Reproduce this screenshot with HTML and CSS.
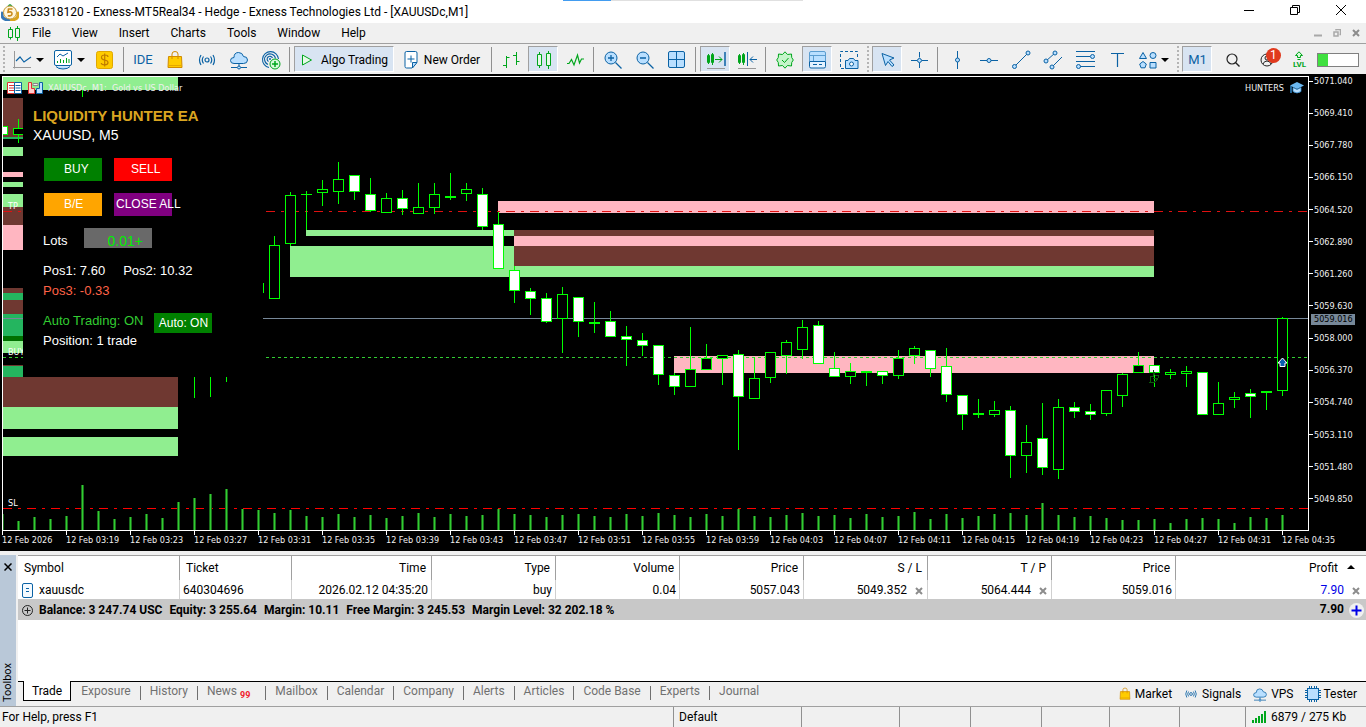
FILE: index.html
```html
<!DOCTYPE html>
<html lang="en">
<head>
<meta charset="utf-8">
<title>253318120 - Exness-MT5Real34 - Hedge - Exness Technologies Ltd - [XAUUSDc,M1]</title>
<link rel="stylesheet" href="styles.css">
</head>
<body>
<svg class="defs" width="0" height="0" aria-hidden="true">
  <symbol id="i-bag" viewBox="0 0 20 20"><path d="M3.500 6.500h13l.5 11h-14z" fill="#fc0" stroke="#d18b00"/><path d="M7 9V4q0-2.500 3-2.500T13 4v5" fill="none" stroke="#d18b00"/><path d="M3 15.500h14" stroke="#e5a800"/></symbol>
  <symbol id="i-signal" viewBox="0 0 20 20"><g fill="none" stroke="#0b62a4" stroke-width="1.200"><circle cx="10" cy="10" r="2"/><path d="M6.500 6.500q-2.500 3.500 0 7M13.500 6.500q2.500 3.500 0 7M4 5q-3 5 0 10M16 5q3 5 0 10"/></g></symbol>
  <symbol id="i-cloud" viewBox="0 0 20 20"><path d="M5 13.500q-3.500 0-3.500-3T5 7.500q0-5 4.500-5 4 0 5 4 4 0 4 3.500t-4 3.500z" fill="#b9dfff" stroke="#0b62a4"/><path d="M10 14v3M2 17.500h6M12 17.500h6" stroke="#0b62a4" fill="none"/><circle cx="10" cy="17.500" r="1.500" fill="#b9dfff" stroke="#0b62a4"/></symbol>
  <symbol id="i-x" viewBox="0 0 8 8"><path d="M1 1l6 6M7 1l-6 6" stroke="#8c8c8c" stroke-width="2"/></symbol>
</svg>

<header class="title-bar">
  <span class="loading-strip"></span>
  <svg class="logo" width="18" height="18" viewBox="0 0 18 18"><path d="M7 2.500Q9-.5 11 2.500L12 5H6z" fill="#2ba24c"/><path d="M2 9q-2 3 0 6 3 2.500 7 2" fill="none" stroke="#3577b5" stroke-width="3"/><path d="M16 9q2 3 0 6-3 2.500-7 2" fill="none" stroke="#d9a41e" stroke-width="3"/><circle cx="9" cy="9.500" r="6.500" fill="#fff6dc" stroke="#c69a3b"/><path d="M11.500 6H7.500L7 9.200q4-1 4 1.500 0 2.700-4.200 2" fill="none" stroke="#c8891a" stroke-width="1.600"/></svg>
  <h1>253318120 - Exness-MT5Real34 - Hedge - Exness Technologies Ltd - [XAUUSDc,M1]</h1>
  <div class="window-buttons">
    <button aria-label="Minimize"><svg width="12" height="12" viewBox="0 0 12 12"><path d="M1 6.500h10" stroke="#000"/></svg></button>
    <button aria-label="Restore"><svg width="12" height="12" viewBox="0 0 12 12"><path d="M1.500 3.500h7v7h-7zM3.500 3.500v-2h7v7h-2" fill="none" stroke="#000"/></svg></button>
    <button aria-label="Close"><svg width="12" height="12" viewBox="0 0 12 12"><path d="M1 1l10 10M11 1L1 11" stroke="#000"/></svg></button>
  </div>
</header>

<nav class="menu-bar">
  <svg width="12" height="15" viewBox="0 0 12 15"><path d="M.5 3.500h4v8h-4zM7.500 2.500h4v9h-4zM2.500 1v2.500M2.500 11.500v2M9.500 0v2.500M9.500 11.500V15" fill="none" stroke="#00a61c"/></svg>
  <button>File</button><button>View</button><button>Insert</button><button>Charts</button><button>Tools</button><button>Window</button><button>Help</button>
  <div class="mdi">
    <svg width="8" height="8" viewBox="0 0 8 8"><path d="M0 6.500h8" stroke="#a8a8a8" stroke-width="2"/></svg>
    <svg width="8" height="8" viewBox="0 0 8 8"><path d="M1 3h4v4H1zM3 1.500V.5h4.500v5H6.500" fill="none" stroke="#a8a8a8" stroke-width="1.500"/></svg>
    <svg width="8" height="8"><use href="#i-x"/></svg>
  </div>
</nav>

<div class="toolbar" role="toolbar">
  <i class="grip"></i>
  <button class="wide" aria-label="Line style"><svg width="20" height="20" viewBox="0 0 20 20"><path d="M2.500 1v17.500M1 17.500h18" stroke="#999" fill="none"/><path d="M4 11l4-4 4 5 7-5" fill="none" stroke="#0b62a4" stroke-width="1.200"/></svg><span class="caret"></span></button>
  <button class="wide second" aria-label="Indicators"><svg width="20" height="20" viewBox="0 0 20 20"><rect x="1.500" y=".5" width="17" height="15" rx="1.500" fill="#fff" stroke="#0b62a4"/><path d="M3 16.500q2 2.500 7 2.500t7-2.500" fill="#b9dfff" stroke="#0b62a4"/><path d="M4 7l3-3 3 2 5-3" fill="none" stroke="#0b62a4"/><path d="M4.500 13v-2M7.500 13v-4M10.500 13v-3M13.500 13V8M16 13V9" stroke="#00a61c"/></svg><span class="caret"></span></button>
  <button aria-label="Quotes"><svg width="18" height="18" viewBox="0 0 18 18"><rect x=".5" y=".5" width="16" height="17" rx="2" fill="#fc0" stroke="#e0a800"/><path d="M12 6q0-2-3.300-2T5.500 6.500q0 2 3.200 2.500t3.300 2.500q0 2.300-3.300 2.300T5.300 12M8.700 2.500v13" fill="none" stroke="#c07c00" stroke-width="1.200"/></svg></button>
  <i class="sep"></i>
  <button class="blue ide">IDE</button>
  <button aria-label="Market"><svg width="20" height="20"><use href="#i-bag"/></svg></button>
  <button aria-label="Signals"><svg width="20" height="20"><use href="#i-signal"/></svg></button>
  <button aria-label="Virtual hosting"><svg width="20" height="20"><use href="#i-cloud"/></svg></button>
  <button aria-label="Copy trading"><svg width="20" height="20" viewBox="0 0 20 20"><g fill="none" stroke="#0b62a4" stroke-width="1.100"><path d="M8 17.500A8 8 0 1 1 17.500 9M7 14.500a5.500 5.500 0 1 1 7.500-6M7.500 11.500a2.800 2.800 0 1 1 4-3.500"/></g><circle cx="9" cy="9" r="1" fill="#0b62a4"/><circle cx="14" cy="14" r="5" fill="#d8fadb" stroke="#00a61c"/><path d="M14 11v6M11 14h6" stroke="#00a61c" stroke-width="1.500"/></svg></button>
  <i class="sep"></i>
  <button class="text algo on"><svg width="12" height="12" viewBox="0 0 12 12"><path d="M1.500 1l9 5-9 5z" fill="#e6fae8" stroke="#00a61c"/></svg>Algo Trading</button>
  <button class="text order"><svg width="14" height="18" viewBox="0 0 14 18"><path d="M2.500.5h9q1.500 0 1.500 1.500v9l-5 6H2.500Q1 17 1 15.500V2Q1 .5 2.500.5z" fill="#fff" stroke="#0b62a4"/><path d="M13 11.500H8.500V17z" fill="#b9dfff" stroke="#0b62a4"/><path d="M7 4.500v7M3.500 8h7" stroke="#0b62a4"/></svg>New Order</button>
  <i class="sep"></i>
  <button aria-label="Bar chart"><svg width="18" height="18" viewBox="0 0 18 18"><path d="M4.500 5v12M4.500 6.500h3M1 14.500h3.500M14.500 1v13M11 4.500h3.500M14.500 10.500h3" stroke="#00a61c" fill="none"/></svg></button>
  <button class="on" aria-label="Candlesticks"><svg width="18" height="18" viewBox="0 0 18 18"><path d="M2.500 3.500h4v11h-4zM11.500 2.500h4v12h-4zM4.500 1v2.500M4.500 14.500V17M13.500 0v2.500M13.500 14.500V18" stroke="#00a61c" fill="#e6fae8"/></svg></button>
  <button aria-label="Line chart"><svg width="18" height="18" viewBox="0 0 18 18"><path d="M1 12.500h2l2.500-4L8 14l3.500-10 2 8 2-4H18" stroke="#00a61c" fill="none" stroke-width="1.200"/></svg></button>
  <i class="sep"></i>
  <button aria-label="Zoom in"><svg width="18" height="18" viewBox="0 0 18 18"><circle cx="7" cy="7" r="6" fill="#b9dfff" stroke="#0b62a4"/><path d="M11.500 11.500l6 6M4 7h6M7 4v6" stroke="#0b62a4" stroke-width="1.300"/></svg></button>
  <button aria-label="Zoom out"><svg width="18" height="18" viewBox="0 0 18 18"><circle cx="7" cy="7" r="6" fill="#b9dfff" stroke="#0b62a4"/><path d="M11.500 11.500l6 6M4 7h6" stroke="#0b62a4" stroke-width="1.300"/></svg></button>
  <button aria-label="Tile windows"><svg width="18" height="18" viewBox="0 0 18 18"><rect x=".5" y=".5" width="16" height="16" rx="1.500" fill="#b9dfff" stroke="#0b62a4"/><path d="M8.500 1v16M1 8.500h16" stroke="#0b62a4"/></svg></button>
  <i class="sep"></i>
  <button class="on" aria-label="Auto scroll"><svg width="20" height="20" viewBox="0 0 20 20"><path d="M1.500 5.500h2v7h-2zM5.500 4.500h2v8h-2zM2.500 4v10M6.500 3v12M9 9.500h7M13 6.500l3 3-3 3" stroke="#00a61c" fill="none"/><path d="M19 2v14" stroke="#0b62a4" stroke-width="1.500"/><path d="M1 18.500h18" stroke="#999"/></svg></button>
  <button aria-label="Chart shift"><svg width="20" height="20" viewBox="0 0 20 20"><path d="M1.500 5.500h2v7h-2zM5.500 4.500h2v8h-2zM2.500 4v10M6.500 3v12" stroke="#00a61c" fill="none"/><path d="M10.500 2v14M13 9.500h7M16 6.500l-3 3 3 3" stroke="#0b62a4" fill="none"/><path d="M1 18.500h18" stroke="#999"/></svg></button>
  <i class="sep"></i>
  <button aria-label="Indicator list"><svg width="18" height="18" viewBox="0 0 18 18"><path d="M9 .8l2.500 2.700L15.500 3l.2 3.500L17.300 9l-1.600 2.500-.2 3.500-4-.5L9 17.200l-2.500-2.700-4 .5-.2-3.500L.7 9l1.600-2.500L2.500 3l4 .5z" fill="#c6f5cb" stroke="#00a61c"/><path d="M6 9l2.500 2.500L12.500 7" stroke="#00a61c" fill="none"/></svg></button>
  <button class="on" aria-label="Toolbox"><svg width="18" height="18" viewBox="0 0 18 18"><path d="M.5 10V2Q.5.500 2 .5h13q1.500 0 1.500 1.500v8M.5 4.500h16M4.500 4.500v6" fill="#b9dfff" stroke="#5b9dd0"/><path d="M.5 10.500h16v5q0 1.500-1.500 1.500H2q-1.500 0-1.500-1.500zM4 13.500h4M10 13.500h3" fill="#e4f2ff" stroke="#0b62a4"/></svg></button>
  <button aria-label="Screenshot"><svg width="20" height="20" viewBox="0 0 20 20"><path d="M5 18.500H1.500v-17h17V7" fill="none" stroke="#0b62a4" stroke-dasharray="3 2"/><path d="M6.500 10.500H9L10.500 8.500h4L16 10.500h3v8H6.500z" fill="#b9dfff" stroke="#0b62a4"/><circle cx="12.500" cy="14" r="2" fill="#fff" stroke="#0b62a4"/></svg></button>
  <i class="grip"></i>
  <button class="on" aria-label="Cursor"><svg width="18" height="18" viewBox="0 0 18 18"><path d="M3 2.500l12 4.500-4.500 2 4.500 5-2 1.500-4-5-2.500 4z" fill="#b9dfff" stroke="#0b62a4"/></svg></button>
  <button aria-label="Crosshair"><svg width="18" height="18" viewBox="0 0 18 18"><path d="M9.500 1v5.500M9.500 11.500V17M1 9.500h6M12 9.500h6" stroke="#0b62a4"/><circle cx="9.500" cy="9.500" r="2" fill="#b9dfff" stroke="#0b62a4"/></svg></button>
  <i class="sep"></i>
  <button aria-label="Vertical line"><svg width="18" height="20" viewBox="0 0 18 20"><path d="M9.500 1v18" stroke="#0b62a4"/><circle cx="9.500" cy="10" r="2" fill="#b9dfff" stroke="#0b62a4"/></svg></button>
  <button aria-label="Horizontal line"><svg width="20" height="18" viewBox="0 0 20 18"><path d="M1 9.500h18" stroke="#0b62a4"/><circle cx="10" cy="9.500" r="2" fill="#b9dfff" stroke="#0b62a4"/></svg></button>
  <button aria-label="Trendline"><svg width="20" height="20" viewBox="0 0 20 20"><path d="M4 16L17 3" stroke="#0b62a4"/><circle cx="3.500" cy="16.500" r="2" fill="#b9dfff" stroke="#0b62a4"/><circle cx="17" cy="3" r="2" fill="#b9dfff" stroke="#0b62a4"/></svg></button>
  <button aria-label="Channel"><svg width="20" height="20" viewBox="0 0 20 20"><path d="M3 11l9-8M9 17l10-10" stroke="#0b62a4"/><circle cx="3" cy="11" r="2" fill="#b9dfff" stroke="#0b62a4"/><circle cx="12" cy="3" r="2" fill="#b9dfff" stroke="#0b62a4"/><circle cx="9" cy="17" r="2" fill="#b9dfff" stroke="#0b62a4"/></svg></button>
  <button aria-label="Fibonacci"><svg width="20" height="20" viewBox="0 0 20 20"><path d="M1 1.500h19M1 6.500h14M1 11.500h19M5 16.500h15" stroke="#0b62a4"/><circle cx="17.500" cy="6.500" r="2" fill="#b9dfff" stroke="#0b62a4"/><circle cx="3.500" cy="16.500" r="2" fill="#b9dfff" stroke="#0b62a4"/></svg></button>
  <button aria-label="Text"><svg width="16" height="16" viewBox="0 0 16 16"><path d="M2 1.500h13M8.500 1.500V15" stroke="#0b62a4" stroke-width="1.200"/></svg></button>
  <button class="wide" aria-label="Shapes"><svg width="18" height="18" viewBox="0 0 18 18"><g fill="#b9dfff" stroke="#0b62a4"><path d="M4 1.500l3.500 6h-7z"/><circle cx="14" cy="4.500" r="3"/><path d="M4 10.500l3.300 2.500-1.300 3.800H2L.7 13z"/><path d="M11 11.500h6v5.500h-6z"/></g></svg><span class="caret"></span></button>
  <i class="grip"></i>
  <button class="on blue m1">M1</button>
  <div class="status-icons">
    <button aria-label="Search"><svg width="16" height="16" viewBox="0 0 16 16"><circle cx="7" cy="7" r="5" fill="none" stroke="#222" stroke-width="1.200"/><path d="M10.500 10.500l4 4" stroke="#222" stroke-width="1.400"/></svg></button>
    <button class="account" aria-label="Account"><svg width="14" height="14" viewBox="0 0 14 14"><circle cx="7" cy="7" r="6" fill="none" stroke="#222"/><circle cx="7" cy="5" r="2" fill="none" stroke="#222"/><path d="M3 11q1-3 4-3t4 3" fill="none" stroke="#222"/></svg><span class="badge">1</span></button>
    <button class="lvl"><svg width="10" height="10" viewBox="0 0 10 10"><path d="M5 .8L8.500 4.500h-2v2h-3v-2h-2zM3.500 8.500h3" fill="#d8fadb" stroke="#00a61c"/></svg>LVL</button>
    <div class="meter"><span></span></div>
  </div>
</div>

<main class="chart">
  <div class="plot">
    <svg class="candles" id="plot" viewBox="3 77 1305 453" preserveAspectRatio="none" shape-rendering="crispEdges"></svg>
    <div class="chart-head">
      <svg width="15" height="12" viewBox="0 0 15 12"><path d="M.5.500h7v11h-7z" fill="#fff" stroke="#d33"/><path d="M7.500.500h7v11h-7z" fill="#fff" stroke="#0b62a4"/><path d="M2 3.500h5M2 6h5M2 8.500h5" stroke="#d33"/><path d="M8.500 3.500h5M8.500 6h5M8.500 8.500h5" stroke="#0b62a4"/></svg>
      <svg width="15" height="12" viewBox="0 0 15 12"><path d="M.5.500h3v6h3v5h-6z" fill="#fcc" stroke="#d33"/><path d="M14.500.500h-3v6h-3v5h6z" fill="#b9dfff" stroke="#0b62a4"/><path d="M5 1.500h5v2H5z" fill="#eee" stroke="#888"/></svg>
      <span>XAUUSDc, M1:&nbsp; Gold vs US Dollar</span>
    </div>
    <div class="expert-name">HUNTERS
      <svg width="14" height="12" viewBox="0 0 14 12"><path d="M7 0l7 3.500-7 3.500-7-3.500z" fill="#6bb8f0"/><path d="M3 5.500v4q4 3 8 0v-4L7 7.500z" fill="#b9dfff" stroke="#2d86c8" stroke-width=".8"/><path d="M1 4v7" stroke="#2d86c8" stroke-width="1.500"/></svg>
    </div>
    <span class="level tp">TP</span>
    <span class="level buy-level">BUY</span>
    <span class="level sl">SL</span>
    <section class="ea">
      <h2>LIQUIDITY HUNTER EA</h2>
      <p class="pair">XAUUSD, M5</p>
      <div class="ea-buttons">
        <button class="b-buy">BUY</button><button class="b-sell">SELL</button>
        <button class="b-be">B/E</button><button class="b-close">CLOSE ALL</button>
      </div>
      <div class="lots"><label for="lots">Lots</label><input id="lots" type="text" value="0.01+"></div>
      <p class="pos"><span>Pos1: 7.60</span><span>Pos2: 10.32</span></p>
      <p class="loss">Pos3: -0.33</p>
      <div class="auto"><span>Auto Trading: ON</span><button>Auto: ON</button></div>
      <p>Position: 1 trade</p>
    </section>
  </div>
  <div class="price-axis">
    <span>5071.040</span><span>5069.410</span><span>5067.780</span><span>5066.150</span><span>5064.520</span><span>5062.890</span><span>5061.260</span><span>5059.630</span><span>5058.000</span><span>5056.370</span><span>5054.740</span><span>5053.110</span><span>5051.480</span><span>5049.850</span>
    <b class="last-price">5059.016</b>
  </div>
  <div class="time-axis">
    <span>12 Feb 2026</span><span>12 Feb 03:19</span><span>12 Feb 03:23</span><span>12 Feb 03:27</span><span>12 Feb 03:31</span><span>12 Feb 03:35</span><span>12 Feb 03:39</span><span>12 Feb 03:43</span><span>12 Feb 03:47</span><span>12 Feb 03:51</span><span>12 Feb 03:55</span><span>12 Feb 03:59</span><span>12 Feb 04:03</span><span>12 Feb 04:07</span><span>12 Feb 04:11</span><span>12 Feb 04:15</span><span>12 Feb 04:19</span><span>12 Feb 04:23</span><span>12 Feb 04:27</span><span>12 Feb 04:31</span><span>12 Feb 04:35</span>
  </div>
</main>

<section class="toolbox">
  <aside class="toolbox-side">
    <button aria-label="Close toolbox"><svg width="8" height="8" viewBox="0 0 8 8"><path d="M.5.500l7 7M7.500.500l-7 7" stroke="#000" stroke-width="1.500"/></svg></button>
    <span>Toolbox</span>
  </aside>
  <div class="toolbox-main">
    <table>
      <colgroup><col class="c-symbol"><col class="c-ticket"><col class="c-time"><col class="c-num"><col class="c-num"><col class="c-num"><col class="c-num"><col class="c-num"><col class="c-num"><col></colgroup>
      <thead><tr><th class="left">Symbol</th><th class="left">Ticket</th><th>Time</th><th>Type</th><th>Volume</th><th>Price</th><th>S / L</th><th>T / P</th><th>Price</th><th class="profit">Profit<i class="sort"></i></th></tr></thead>
      <tbody>
        <tr><td class="left sym"><svg width="11" height="15" viewBox="0 0 11 15"><rect x=".5" y=".5" width="10" height="14" rx="1.500" fill="#f4faff" stroke="#0b62a4"/><path d="M4 5.500h3M4 8.500h3" stroke="#0b62a4"/></svg>xauusdc</td><td class="left">640304696</td><td>2026.02.12 04:35:20</td><td>buy</td><td>0.04</td><td>5057.043</td><td class="with-x">5049.352<svg width="8" height="8"><use href="#i-x"/></svg></td><td class="with-x">5064.444<svg width="8" height="8"><use href="#i-x"/></svg></td><td>5059.016</td><td class="gain with-x">7.90<svg width="8" height="8"><use href="#i-x"/></svg></td></tr>
      </tbody>
      <tfoot><tr><td colspan="9" class="left"><svg width="11" height="11" viewBox="0 0 11 11"><circle cx="5.500" cy="5.500" r="5" fill="none" stroke="#222"/><path d="M5.500 2.500v6M2.500 5.500h6" stroke="#222"/></svg><span>Balance: 3 247.74 USC</span><span>Equity: 3 255.64</span><span>Margin: 10.11</span><span>Free Margin: 3 245.53</span><span>Margin Level: 32 202.18 %</span></td><td class="total">7.90<svg width="15" height="15" viewBox="0 0 15 15"><circle cx="7.500" cy="7.500" r="7.500" fill="#f0f0f0"/><path d="M7.500 2.500v10M2.500 7.500h10" stroke="#0000e6" stroke-width="2"/></svg></td></tr></tfoot>
    </table>
    <div class="tab-row">
      <div class="tabs" role="tablist">
        <button class="active" role="tab">Trade</button><button role="tab">Exposure</button><button role="tab">History</button><button role="tab" class="news">News<sub>99</sub></button><button role="tab">Mailbox</button><button role="tab">Calendar</button><button role="tab">Company</button><button role="tab">Alerts</button><button role="tab">Articles</button><button role="tab">Code Base</button><button role="tab">Experts</button><button role="tab">Journal</button>
      </div>
      <div class="services">
        <button><svg width="14" height="14"><use href="#i-bag"/></svg>Market</button>
        <button><svg width="16" height="14"><use href="#i-signal"/></svg>Signals</button>
        <button><svg width="16" height="15"><use href="#i-cloud"/></svg>VPS</button>
        <button><svg width="16" height="16" viewBox="0 0 16 16"><rect x="2.500" y="2.500" width="11" height="11" fill="#b9dfff" stroke="#0b62a4"/><path d="M4.500 0v2M6.500 0v2M9.500 0v2M11.500 0v2M4.500 14v2M6.500 14v2M9.500 14v2M11.500 14v2M0 4.500h2M0 6.500h2M0 9.500h2M0 11.500h2M14 4.500h2M14 6.500h2M14 9.500h2M14 11.500h2" stroke="#0b62a4"/></svg>Tester</button>
      </div>
    </div>
  </div>
</section>

<footer class="status-bar">
  <span class="help">For Help, press F1</span><span class="s-default">Default</span><span class="s-98"></span><span class="s-71"></span><span class="s-71"></span><span class="s-68"></span><span class="s-70"></span><span class="s-66"></span>
  <span class="traffic"><svg width="14" height="12" viewBox="0 0 14 12"><path d="M1 9v3M4 7v5M7 5v7M10 3v9M13 0v12" stroke="#00a61c" stroke-width="2"/></svg>6879 / 275 Kb</span>
</footer>
<script src="chart.js"></script>
</body>
</html>
```
FILE: styles.css
```css
* { box-sizing: border-box; }
html, body { height: 100%; }
body {
  margin: 0;
  display: flex;
  flex-direction: column;
  overflow: hidden;
  background: #f0f0f0;
  color: #000;
  font: 12px/16px Roboto, "Noto Sans", sans-serif;
}
button, input { font: inherit; color: inherit; border: 0; padding: 0; margin: 0; background: none; }
h1, h2, p { margin: 0; font: inherit; }
svg { flex: none; display: block; }
.defs { position: absolute; }

.title-bar { position: relative; flex: none; height: 23px; display: flex; align-items: center; gap: 4px; padding-left: 1px; background: #fff; }
.loading-strip { position: absolute; top: 0; left: 41.2%; width: 240px; height: 1px; background: linear-gradient(90deg, #429cf0 20%, #e0e0e0 20%); }
.window-buttons { margin-left: auto; display: flex; padding: 0 2px 3px 0; }
.window-buttons button { width: 46px; display: flex; justify-content: center; }

.menu-bar { flex: none; height: 21px; display: flex; align-items: center; padding-left: 8px; border-bottom: 1px solid #a0a0a0; }
.menu-bar button { padding: 0 10px 0 11px; }
.menu-bar svg + button { padding-left: 12px; }
.mdi { margin-left: auto; display: flex; gap: 11px; padding-right: 6px; }

.toolbar { flex: none; height: 30px; display: flex; align-items: center; gap: 2px; padding: 0 0 0 2px; }
.toolbar > button { flex: none; width: 30px; height: 26px; display: flex; align-items: center; justify-content: center; padding: 2px 0 0; }
.toolbar > .wide { width: 40px; gap: 4px; }
.toolbar > .second { width: 38px; }
.toolbar > .on { background: #d8e4f2; border: 1px solid #fff; border-top-color: #a0a0a0; border-left-color: #a0a0a0; padding: 1px 0 0 1px; }
.toolbar > .text { white-space: nowrap; gap: 8px; }
.toolbar > .algo { width: 100px; }
.toolbar > .order { width: 92px; gap: 6px; }
.caret { width: 0; height: 0; border: 4px solid transparent; border-top-color: #000; border-bottom: 0; }
.blue { color: #0b62a4; }
.toolbar > .ide, .toolbar > .m1 { font-size: 13px; }
.sep { flex: none; width: 4px; height: 25px; background: linear-gradient(90deg, transparent 1px, #909090 1px 2px, transparent 2px); }
.grip { flex: none; width: 4px; height: 26px; background: repeating-linear-gradient(#b4b4b4 0 2px, transparent 2px 4px) 1px 0 / 2px 100% no-repeat; }
.status-icons { flex: 1; display: flex; align-items: center; justify-content: flex-end; gap: 11px; padding: 2px 7px 0 0; }
.account { position: relative; padding: 0 8px; }
.badge { position: absolute; right: 1px; top: -5px; width: 15px; height: 15px; border-radius: 8px; background: #e03a1e; color: #fff; font-size: 12px; line-height: 15px; text-align: center; }
.lvl { display: flex; flex-direction: column; align-items: center; color: #00a61c; font-size: 8px; font-weight: 700; line-height: 8px; }
.meter { width: 42px; height: 14px; border: 1px solid #808080; background: #fff; }
.meter span { display: block; width: 10px; height: 100%; background: #3fe03f; }

.chart {
  flex: 1;
  min-height: 0;
  display: grid;
  grid-template: minmax(0, 1fr) 20px / minmax(0, 1fr) 57px;
  padding: 2px 0 0 2px;
  background: #000;
  color: #f0f0f0;
  font: 9px/12px "DejaVu Sans Condensed", "DejaVu Sans", sans-serif;
}
.plot { position: relative; border: 1px solid #fff; overflow: hidden; }
.candles { position: absolute; inset: 0; width: 100%; height: 100%; }
.chart-head { position: absolute; left: 4px; top: 5px; display: flex; align-items: center; gap: 5px; }
.chart-head svg + svg { margin-left: 1px; }
.expert-name { position: absolute; right: 4px; top: 5px; display: flex; align-items: center; gap: 6px; }
.level { position: absolute; left: 5px; color: #fff; }
.tp { top: 123px; }
.buy-level { top: 269px; }
.sl { top: 420px; }

.ea { position: absolute; left: 20px; top: 20px; width: 240px; height: 280px; padding: 10px 0 0 20px; background: #000; color: #fff; font: 13px/20px "Liberation Sans", Arial, sans-serif; }
.ea h2 { margin-left: -10px; color: #daa520; font-size: 15px; font-weight: 700; line-height: 18px; }
.ea .pair { margin-left: -10px; font-size: 14px; }
.ea-buttons { display: grid; grid-template-columns: 58px 58px; gap: 12px; margin: 13px 0 12px 1px; }
.ea-buttons button { height: 23px; font-size: 12px; text-align: left; white-space: nowrap; padding: 0 0 2px 20px; }
.ea-buttons .b-buy { background: #008000; }
.ea-buttons .b-sell { background: #f00; padding-left: 17px; }
.ea-buttons .b-be { background: #ffa500; }
.ea-buttons .b-close { background: #800080; padding-left: 2px; }
.lots { display: flex; align-items: center; gap: 16px; height: 20px; }
.lots label { padding-top: 6px; }
.lots input { width: 68px; height: 20px; padding: 5px 0 0 24px; background: #696969; color: #00f000; font-size: 14px; }
.pos { display: flex; gap: 18px; margin-top: 13px; }
.loss { color: #ff6347; }
.auto { display: flex; align-items: flex-start; gap: 11px; height: 20px; margin-top: 10px; color: #32cd32; }
.auto button { width: 58px; height: 20px; margin-top: 2px; background: #008000; color: #fff; font-size: 12px; }

.price-axis { position: relative; display: flex; flex-direction: column; justify-content: space-between; padding: 0 0 26px; margin-top: -1px; }
.price-axis span { display: flex; align-items: center; gap: 1px; height: 12px; }
.price-axis span::before { content: ""; width: 4px; height: 1px; background: #fff; }
.last-price { position: absolute; left: 2px; top: 239px; width: 44px; height: 11px; padding-left: 3px; background: #778899; color: #000; font-weight: 400; line-height: 11px; }
.time-axis { grid-column: 1 / -1; display: flex; overflow: hidden; white-space: nowrap; }
.time-axis span { flex: none; width: 64px; height: 16px; padding-top: 3px; background: linear-gradient(#fff, #fff) 0 0 / 1px 4px no-repeat; }

.toolbox { flex: none; height: 156px; display: flex; gap: 2px; padding-top: 4px; border-bottom: 1px solid #a0a0a0; }
.toolbox-side { flex: none; width: 16px; display: flex; flex-direction: column; align-items: center; justify-content: space-between; padding: 8px 0 4px; background: #b9c8d8; }
.toolbox-side span { writing-mode: vertical-rl; transform: rotate(180deg); font-size: 11px; }
.toolbox-main { flex: 1; min-width: 0; display: flex; flex-direction: column; border-top: 1px solid #a0a0a0; background: #fff; }
table { width: 100%; table-layout: fixed; border-collapse: separate; border-spacing: 0; }
.c-symbol { width: 162px; }
.c-ticket { width: 112px; }
.c-time { width: 140px; }
.c-num { width: 124px; }
th, td { padding: 0 3px; font-weight: 400; text-align: right; border-right: 1px solid #d0d0d0; white-space: nowrap; }
th { height: 24px; padding: 0 5px; border-color: #a0a0a0; }
th.left { padding-left: 6px; }
td { height: 19px; padding-top: 1px; }
th:last-child, td:last-child { border-right: 0; }
.left { text-align: left; }
td svg { display: inline-block; vertical-align: middle; }
.sym svg { margin: 0 6px 0 1px; }
.with-x svg { margin: 0 1px 0 8px; }
td.with-x { padding-right: 3px; }
td.gain { color: #0000e6; padding-right: 5px; }
.profit { padding-right: 11px; }
.sort { display: inline-block; margin: 0 0 3px 9px; border: 4px solid transparent; border-bottom-color: #000; border-top: 0; }
tfoot td { height: 21px; padding-top: 0; background: #c8c8c8; border: 0; font-weight: 700; }
tfoot svg { margin: 0 6px 0 1px; }
tfoot span { margin-right: 7px; }
tfoot .total { padding-right: 2px; }
.total svg { margin: 0 0 0 5px; }

.tab-row { display: flex; justify-content: space-between; height: 25px; margin-top: auto; background: #f0f0f0; border-top: 1px solid #000; }
.tabs { display: flex; padding-left: 5px; color: #707070; }
.tabs button { height: 18px; padding: 0 9px 0 10px; position: relative; }
.tabs button + button + button::before { content: ""; position: absolute; left: 0; top: 4px; width: 1px; height: 14px; background: #707070; }
.tabs .active { height: 20px; margin-top: -1px; background: #fff; color: #000; border: 1px solid #000; border-top: 0; padding: 0 8px; }
.tabs sub { margin-left: 3px; color: #f0202c; font-size: 9px; font-weight: 700; line-height: 0; vertical-align: -3px; }
.tabs .news { padding-right: 15px; }
.services { display: flex; align-items: center; gap: 11px; padding-right: 9px; }
.services button { display: flex; align-items: center; gap: 3px; }

.status-bar { flex: none; height: 20px; display: flex; align-items: stretch; line-height: 21px; white-space: nowrap; }
.status-bar > span + span { border-left: 1px solid #909090; }
.help { flex: 1; padding-left: 2px; }
.s-default { width: 128px; padding-left: 5px; }
.s-98 { width: 98px; }
.s-71 { width: 71px; }
.s-68 { width: 68px; }
.s-70 { width: 70px; }
.s-66 { width: 66px; }
.traffic { width: 121px; display: flex; align-items: center; gap: 5px; padding-left: 6px; }
```
FILE: chart.js
```js
// Plot coordinates: one unit per pixel at the default window size.
const NS = 'http://www.w3.org/2000/svg';
const plot = document.getElementById('plot');
const LIME = '#00ff00', GREEN = '#90ee90', PINK = '#ffb6c1', BROWN = '#6f3831', SEA = '#24b55f';

function rect(x1, y1, x2, y2, fill) {
  const r = document.createElementNS(NS, 'rect');
  r.setAttribute('x', x1);
  r.setAttribute('y', y1);
  r.setAttribute('width', x2 - x1);
  r.setAttribute('height', y2 - y1);
  r.setAttribute('fill', fill);
  plot.appendChild(r);
}
function line(x1, x2, y, color, dash) {
  const p = document.createElementNS(NS, 'path');
  p.setAttribute('d', `M${x1} ${y + 0.5}H${x2}`);
  p.setAttribute('stroke', color);
  if (dash) p.setAttribute('stroke-dasharray', dash);
  plot.appendChild(p);
}

// Supply and demand zones
[
  [3, 77, 178, 90, GREEN], [3, 98, 23, 137, BROWN], [3, 137, 23, 139, SEA], [3, 147, 23, 156, GREEN],
  [3, 172, 23, 177, PINK], [3, 182, 23, 187, GREEN], [3, 194, 23, 207, GREEN], [3, 207, 23, 225, BROWN],
  [3, 225, 23, 250, PINK], [3, 288, 23, 293, BROWN], [3, 293, 23, 300, SEA], [3, 300, 23, 314, BROWN],
  [3, 314, 23, 336, SEA], [3, 336, 23, 341, '#007000'], [3, 341, 23, 353, GREEN], [3, 365, 23, 366, BROWN],
  [3, 366, 23, 377, SEA], [3, 377, 178, 407, BROWN], [3, 407, 178, 429, GREEN], [3, 437, 178, 456, GREEN],
].forEach(z => rect(...z));

// Volumes: top of each bar, one bar every 16 units from x = 2
const volumes = [514, 521, 517, 519, 516, 485, 511, 519, 517, 514, 518, 502, 498, 494, 489, 509, 510,
  513, 510, 516, 517, 514, 517, 515, 518, 516, 513, 517, 514, 516, 515, 509, 514, 515, 517, 515, 514, 516,
  517, 514, 516, 513, 515, 517, 514, 516, 509, 516, 517, 515, 513, 516, 515, 518, 514, 517, 516, 512, 519,
  514, 518, 516, 514, 513, 515, 503, 515, 517, 516, 518, 520, 520, 519, 523, 519, 518, 519, 523, 517, 518, 515];
line(3, 1308, 508, '#ff0000', '9 6 3 6');
volumes.forEach((top, i) => {
  const x = 2 + i * 16;
  rect(x - 1, top, x + 2, 530, '#1a701a');
  rect(x, top, x + 1, 530, '#32cd32');
});

// x, high, body top, body bottom, low, kind (h hollow, f filled, d flat)
const candles = `274 236 245 299 299 h;290 192 195 244 246 h;306 191 194 195 230 d;322 180 189 193 206 h
338 162 179 192 204 h;354 175 175 192 200 f;370 178 194 211 212 f;386 193 198 213 213 h;402 190 198 209 215 f
418 183 207 214 214 h;434 183 194 208 214 h;450 173 196 198 200 d;466 183 189 194 201 h;482 188 194 227 230 f
498 212 224 269 269 f;514 266 270 291 303 f;530 288 291 299 315 f;546 293 298 322 323 f;562 287 294 319 353 h
578 297 297 322 337 f;594 302 322 324 333 d;610 311 321 337 337 f;626 326 336 340 366 f;642 333 340 346 356 f
658 345 345 375 385 f;674 373 375 387 395 f;690 327 369 387 387 h;706 344 358 370 370 h;722 355 355 359 385 h
738 350 354 397 450 f;754 357 378 399 399 h;770 352 352 378 383 h;786 340 342 356 374 h;802 320 327 350 359 h
818 321 325 364 364 f;834 352 368 377 377 f;850 363 371 377 384 h;866 371 371 373 386 d;882 371 371 376 384 f
898 350 358 376 379 h;914 346 348 356 364 h;930 350 350 369 377 f;946 348 366 395 402 f;962 395 395 415 430 f
978 399 413 415 418 d;994 401 410 415 417 h;1010 406 410 456 478 f;1026 425 442 456 473 h;1042 403 438 468 475 f
1058 399 407 470 479 h;1074 402 407 412 418 f;1090 404 411 415 420 f;1106 390 390 414 416 h;1122 373 374 396 407 h
1138 352 365 373 373 h;1154 365 365 373 387 f;1170 369 372 375 379 h;1186 366 371 374 387 h;1202 372 372 415 415 f
1218 382 403 415 415 h;1234 392 397 400 408 h;1250 389 393 397 418 f;1266 391 391 393 410 d;1282 317 318 391 396 h
2 126 126 135 135 f;18 119 128 135 143 h`.split(/[;\n]/).map(row => row.trim().split(' '));

line(3, 1308, 318, '#778899');

[
  [498, 201, 1154, 213, PINK], [306, 230, 514, 236, GREEN], [290, 246, 514, 277, GREEN],
  [514, 230, 1154, 236, BROWN], [514, 236, 1154, 246, PINK], [514, 246, 1154, 266, BROWN],
  [514, 266, 1154, 277, GREEN], [674, 356, 1154, 373, PINK],
].forEach(z => rect(...z));
[[3, 23], [266, 1308]].forEach(([a, b]) => {
  line(a, b, 211, '#e01010', '9 6 3 6');
  line(a, b, 357, '#32cd32', '3 3');
});

candles.forEach(([cx, high, top, bottom, low, kind]) => {
  const x = +cx;
  rect(x, +high, x + 1, +low, LIME);
  rect(x - 5, +top, x + 6, +bottom, LIME);
  if (kind !== 'd') rect(x - 4, +top + 1, x + 5, bottom - 1, kind === 'f' ? '#fff' : '#000');
});
[[82, 90, 97], [194, 377, 398], [210, 377, 397], [226, 377, 382], [263, 283, 293]]
  .forEach(([x, a, b]) => rect(x, a, x + 1, b, LIME));

// Trade markers
const entry = document.createElementNS(NS, 'path');
entry.setAttribute('d', 'M1282.500 358l4.500 5h-2v3.500h-5V363h-2z');
entry.setAttribute('fill', '#0b5fb0');
entry.setAttribute('stroke', '#fff');
entry.setAttribute('shape-rendering', 'auto');
plot.appendChild(entry);
const thumb = document.createElementNS(NS, 'path');
thumb.setAttribute('d', 'M1150 376v6M1150 376h3v-6l2 5h3v3l-2 3-3 2-4-1M1153 378h5');
thumb.setAttribute('fill', 'none');
thumb.setAttribute('stroke', '#0a5a0a');
plot.appendChild(thumb);
```
